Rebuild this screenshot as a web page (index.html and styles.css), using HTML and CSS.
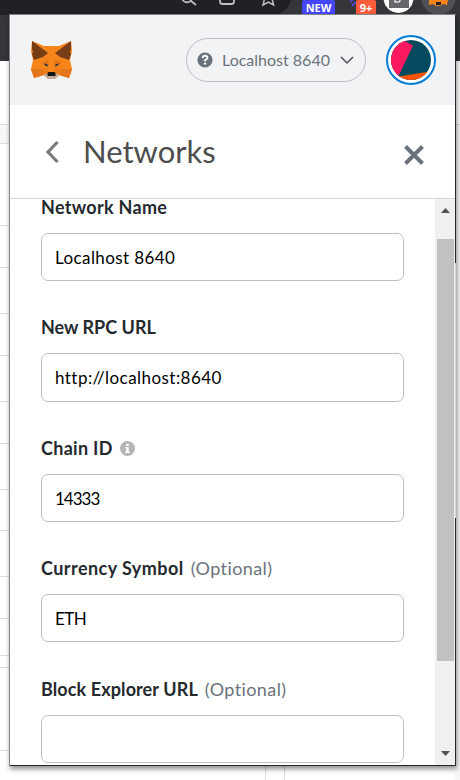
FILE: index.html
```html
<!DOCTYPE html>
<html lang="en">
<head>
<meta charset="utf-8">
<title>Networks</title>
<link rel="stylesheet" href="styles.css">
</head>
<body>
<svg class="backdrop" width="460" height="780" viewBox="0 0 460 780" aria-hidden="true">
  <path fill="#fff" d="M0 61h460v719H0z"/>
  <path fill="#202124" d="M0 0h460v15H0z"/>
  <path fill="#35363a" d="M280 0h180v61H280zM0 15h12v46H0z"/>
  <path fill="#202124" d="M270 0h21q-2 11-15 15h-6z"/>
  <path fill="#f8f8f9" d="M0 125h10v18H0zM455 125h5v655h-5z"/>
  <path stroke="#dcdee2" d="M0 124.500h10M0 143.500h10M0 225.500h10M0 267.500h10M0 313.500h10M0 355.500h10M0 401.500h10M0 443.500h10M0 489.500h10M0 530.500h10M0 576.500h10M0 618.500h10M0 655.500h10M0 667.500h10M0 750.500h10M455 124.500h5M265.500 766v14M284.500 766v14"/>
  <g fill="none" stroke="#bdc1c6" stroke-width="1.800">
    <circle cx="187" cy="-2.500" r="4.800"/><path d="m190.500 .5 5.500 4.500"/>
    <path d="M220 0v1.500q0 2.500 2.500 2.500h9q2.500 0 2.500-2.500V0"/>
    <path d="m264.500-1-1.500 6 5.300-3 5.300 3-1.500-6" stroke-width="1.500"/>
  </g>
  <path d="m350 2 3-2m-1 6 4-4" stroke="#5145cd" stroke-width="2"/>
  <circle cx="398.500" cy="-2" r="15" fill="#fff"/><path fill="#66676a" d="M389 0h20v8h-20z"/>
  <path d="M395 0v2h3q2 0 2-2" fill="none" stroke="#ddd" stroke-width="1.500"/>
  <circle cx="438.500" cy="-2" r="17" fill="#505154"/>
  <path fill="#f6851b" d="M429 0h19l-1 5-4-1-3 2h-4l-3-2-4 1z"/><path fill="#222" d="M436 2h5v3h-5z"/>
</svg>
<span class="badge badge-new">NEW</span>
<span class="badge badge-count">9+</span>

<main class="popup">
  <header class="app-header">
    <svg class="fox" width="43" height="40" viewBox="0 0 43 40" aria-label="MetaMask">
      <path fill="#f6851b" d="m2 1 12 5h15L41 1l1 10-2 9 2 9-3 9-10-3-4 4h-7l-4-4-10 3-3-9 2-9-2-9z"/>
      <path fill="#763d16" d="m2 1 16 12-5 4-9 3-2-6 1-2-1-3zM41 1 25 13l5 4 9 3 2-6-1-2 1-3z"/>
      <path fill="#e4761b" d="M1 29h11l2 6-10 3zM42 29H31l-2 6 10 3z"/>
      <path fill="#e2701b" d="m11 23 7-3 1 6-3-1zM32 23l-7-3-1 6 3-1z"/>
      <path fill="#ed7c1b" d="m12 29 6-2v5l-4 3zM31 29l-6-2v5l4 3z"/>
      <path fill="#c0ad9e" d="m14 35 4-2h7l4 2-4 4h-7z"/>
      <path fill="#233447" d="m14 23.500 3.500 1 .5 2-3-1zM29 23.500l-3.500 1-.5 2 3-1z"/>
      <path fill="#161616" d="M18.500 32h6l1 1v3h-8v-3z"/>
    </svg>
    <div class="network-pill">
      <svg width="16" height="16" viewBox="0 0 16 16"><circle cx="8" cy="8" r="7.600" fill="#6a737d"/><path d="M5.700 6q.3-2.400 2.500-2.300Q10.600 3.800 10.400 6 10.200 7.200 8 8.100v1.200" fill="none" stroke="#fff" stroke-width="1.900"/><circle cx="8" cy="11.600" r="1.200" fill="#fff"/></svg>
      <span class="pill-text">Localhost 8640</span>
      <svg class="chevron" width="14" height="9" viewBox="0 0 14 9"><path d="m1 1 6 6 6-6" fill="none" stroke="#4d5156" stroke-width="1.500"/></svg>
    </div>
    <svg class="avatar" width="50" height="50" viewBox="0 0 50 50">
      <defs><clipPath id="disc"><circle cx="25" cy="25" r="20"/></clipPath></defs>
      <circle cx="25" cy="25" r="24" fill="#fff" stroke="#037dd6" stroke-width="2"/>
      <g clip-path="url(#disc)"><path fill="#034a5e" d="M0 0h50v50H0z"/><path fill="#fc1960" d="M0 0h15l2 5 10 5.500L13 40 12 50H0z"/><path fill="#fa5300" d="m10 42 36-6v14H10z"/></g>
    </svg>
  </header>
  <div class="title-bar">
    <svg class="back" width="14" height="24" viewBox="0 0 14 24"><path d="M12.500 2 3 12l9.500 10" fill="none" stroke="#7c7c7c" stroke-width="3.200"/></svg>
    <h1><span class="title-text">Networks</span></h1>
    <svg class="close" width="20" height="20" viewBox="0 0 20 20"><path d="m1.500 1.500 17 17m0-17-17 17" stroke="#6a737d" stroke-width="3.900"/></svg>
  </div>
  <div class="content">
    <form class="form">
      <div class="field"><div class="label"><b class="l-name">Network Name</b></div><div class="input"><span class="v-name">Localhost 8640</span></div></div>
      <div class="field"><div class="label"><b class="l-rpc">New RPC URL</b></div><div class="input"><span class="v-rpc">http://localhost:8640</span></div></div>
      <div class="field"><div class="label"><b class="l-chain">Chain ID</b>
        <svg width="15" height="15" viewBox="0 0 15 15"><circle cx="7.500" cy="7.500" r="7.500" fill="#b5b5b5"/><path fill="#fff" d="M6.200 2.800h2.500v2.100H6.200zM5.400 6h3.300v4.500h1v1.400H5.300v-1.400h1V7.400h-.9z"/></svg></div><div class="input"><span class="v-chain">14333</span></div></div>
      <div class="field"><div class="label"><b class="l-cur">Currency Symbol</b><span class="optional">(Optional)</span></div><div class="input"><span class="v-eth">ETH</span></div></div>
      <div class="field"><div class="label"><b class="l-block">Block Explorer URL</b><span class="optional">(Optional)</span></div><div class="input"></div></div>
    </form>
    <div class="scrollbar">
      <svg width="9" height="5" viewBox="0 0 9 5"><path fill="#505050" d="m0 5 4.500-5L9 5z"/></svg>
      <div class="thumb"></div>
      <svg class="down" width="9" height="5" viewBox="0 0 9 5"><path fill="#505050" d="m0 0 4.500 5L9 0z"/></svg>
    </div>
  </div>
</main>
</body>
</html>
```
FILE: styles.css
```css
* { box-sizing: border-box; }
body {
  margin: 0;
  width: 460px;
  height: 780px;
  overflow: hidden;
  padding: 15px 0 0 10px;
  font-family: Lato, "Liberation Sans", sans-serif;
  font-variant-ligatures: none;
  color: #24292e;
}
svg { display: block; flex: none; }
span, b { white-space: nowrap; }
.backdrop { position: absolute; left: 0; top: 0; z-index: -1; }
.badge {
  position: absolute;
  top: 0;
  height: 15px;
  border-radius: 2px;
  color: #fff;
  font: bold 11px/16px "Open Sans", sans-serif;
  text-align: center;
}
.badge-new { left: 302px; width: 33px; background: #4646ff; }
.badge-count { left: 356px; width: 20px; background: #ff5c3c; }
.popup {
  position: relative;
  width: 445px;
  height: 750px;
  background: #fff;
  box-shadow: 0 0 0 1px #85868a, 1px 3px 5px 1px rgba(0, 0, 0, .45);
}
.popup::after {
  content: "";
  position: absolute;
  inset: 0 -1px -1px 0;
  border-right: 1px solid;
  border-bottom: 1px solid #25282c;
  border-image: linear-gradient(#25282c 249px, #d5d5d5 249px, #d5d5d5 503px, #25282c 503px) 1;
  border-image-width: 0 1px 1px 0;
}
.app-header {
  display: flex;
  align-items: center;
  height: 90px;
  padding: 0 19px 0 20px;
  background: #f2f3f4;
}
.network-pill {
  display: flex;
  align-items: center;
  width: 180px;
  height: 44px;
  margin-left: auto;
  padding: 0 11px 0 10px;
  border: 1px solid #bbc0c5;
  border-radius: 22px;
}
.pill-text { margin: 0 0 2px 9px; font-size: 16px; color: #6a737d; }
.chevron { margin-left: auto; }
.avatar { margin-left: 20px; }
.title-bar {
  display: flex;
  align-items: center;
  height: 94px;
  padding: 0 31px 0 35px;
  border-bottom: 1px solid #d2d5d9;
}
.back { margin-top: 1px; }
h1 { margin: 0 0 1px 24px; font-size: 31px; font-weight: 400; line-height: 40px; color: #4d4d4d; }
.title-text { letter-spacing: 0; }
.close { margin: 7px 0 0 auto; }
.content { display: flex; height: 566px; }
.form { flex: 1; padding-left: 31px; }
.field { height: 120.400px; }
.field:last-child { height: auto; }
.label { display: flex; align-items: center; height: 17px; margin-bottom: 17px; font-size: 18px; line-height: 17px; }
.label svg { margin-left: 7px; }
.l-name { letter-spacing: .3px; }
.l-chain { letter-spacing: .3px; }
.l-cur { letter-spacing: .45px; }
.l-block { letter-spacing: .1px; }
.optional { margin-left: 7px; color: #6a737d; letter-spacing: .4px; }
.input {
  display: flex;
  align-items: center;
  width: 363px;
  height: 48.200px;
  padding: 1px 13px 0;
  border: 1px solid #bbc0c5;
  border-radius: 7px;
  font-size: 17px;
  color: #000;
}
.v-name { letter-spacing: .4px; }
.v-rpc { letter-spacing: .45px; }
.v-chain { letter-spacing: -1px; }
.v-eth { letter-spacing: -.6px; }
.scrollbar {
  display: flex;
  flex-direction: column;
  align-items: center;
  width: 20px;
  padding: 9px 0;
  background: #f0f0f0;
}
.thumb { flex: none; width: 17px; height: 422px; margin-top: 26px; background: #c1c1c1; }
.down { margin-top: auto; }
```
